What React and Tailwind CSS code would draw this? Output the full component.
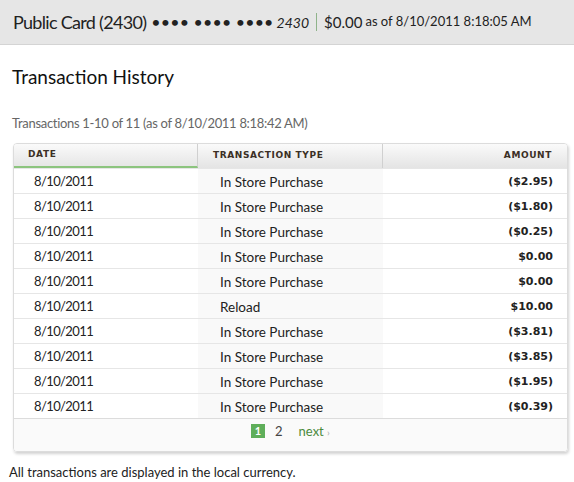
import React from "react";

const rows = [
  { date: "8/10/2011", type: "In Store Purchase", amount: "($2.95)" },
  { date: "8/10/2011", type: "In Store Purchase", amount: "($1.80)" },
  { date: "8/10/2011", type: "In Store Purchase", amount: "($0.25)" },
  { date: "8/10/2011", type: "In Store Purchase", amount: "$0.00" },
  { date: "8/10/2011", type: "In Store Purchase", amount: "$0.00" },
  { date: "8/10/2011", type: "Reload", amount: "$10.00" },
  { date: "8/10/2011", type: "In Store Purchase", amount: "($3.81)" },
  { date: "8/10/2011", type: "In Store Purchase", amount: "($3.85)" },
  { date: "8/10/2011", type: "In Store Purchase", amount: "($1.95)" },
  { date: "8/10/2011", type: "In Store Purchase", amount: "($0.39)" },
];

const font = { fontFamily: "Lato, 'Open Sans', sans-serif" };

export default function App() {
  return (
    <div className="w-[574px] h-[482px] bg-white text-[#222] overflow-hidden" style={font}>
      <div className="h-[45px] bg-[#e6e6e6] border-b border-[#d4d4d4] flex items-center pl-[13px] whitespace-nowrap">
        <span className="text-[18px] text-[#222] tracking-[-0.7px]">Public Card (2430)</span>
        <span className="ml-[5px] text-[16px] tracking-[0.2px] text-[#222]">•••• •••• ••••</span>
        <span className="ml-[3px] text-[14px] italic">2430</span>
        <span className="mx-[7px] w-px h-[18px] bg-[#8fb38a]" />
        <span className="text-[15px]">$0.00</span>
        <span className="ml-[3px] text-[13px]">as of 8/10/2011 8:18:05 AM</span>
      </div>

      <div className="pl-[12px] pt-[20px] text-[19px] leading-[24px] text-[#111]">Transaction History</div>
      <div className="pl-[12px] pt-[25px] text-[13px] tracking-[-0.3px] leading-[18px] text-[#666]">
        Transactions 1-10 of 11 (as of 8/10/2011 8:18:42 AM)
      </div>

      <div className="ml-[13px] mt-[11px] w-[555px] rounded-[4px] border border-[#dcdcdc] shadow-[1px_2px_3px_rgba(0,0,0,0.18)] overflow-hidden">
        <div className="flex h-[24px] bg-gradient-to-b from-[#fafafa] to-[#e4e4e4] text-[9px] font-bold tracking-[0.6px] text-[#3b2f25]" style={{ fontFamily: "'DejaVu Sans', sans-serif" }}>
          <div className="w-[184px] pl-[14px] flex items-center border-b-2 border-[#8cc47e] border-r border-r-[#d0d0d0]">DATE</div>
          <div className="w-[185px] pl-[15px] flex items-center border-r border-[#d0d0d0]">TRANSACTION TYPE</div>
          <div className="flex-1 pr-[15px] flex items-center justify-end">AMOUNT</div>
        </div>
        {rows.map((r, i) => (
          <div key={i} className="flex h-[25px] border-t border-[#e6e6e6] text-[14px] text-[#222]">
            <div className="w-[184px] pl-[20px] pt-[2px] flex items-center bg-white text-[13px] tracking-[-0.6px]">{r.date}</div>
            <div className="w-[185px] pl-[22px] pt-[2px] flex items-center bg-[#f9f9f9] text-[13.5px]">{r.type}</div>
            <div className="flex-1 pr-[14px] pt-[2px] flex items-center justify-end bg-white text-[11px] font-bold text-[#222]" style={{ fontFamily: "'DejaVu Sans', sans-serif" }}>
              {r.amount}
            </div>
          </div>
        ))}
        <div className="h-[33px] border-t border-[#dcdcdc] bg-[#fafafa] flex items-start justify-center pt-[4px] gap-[10px] text-[13px]">
          <span className="w-[14px] h-[14px] bg-[#5fae5a] text-white text-[11px] font-bold flex items-center justify-center mt-[1px]">1</span>
          <span className="text-[#444] leading-[16px]">2</span>
          <span className="ml-[6px] text-[#4b8a3c] leading-[16px]">
            next <span className="text-[#aaa] text-[10px]">›</span>
          </span>
        </div>
      </div>

      <div className="pl-[9px] pt-[11px] text-[13px] text-[#222]">All transactions are displayed in the local currency.</div>
    </div>
  );
}
